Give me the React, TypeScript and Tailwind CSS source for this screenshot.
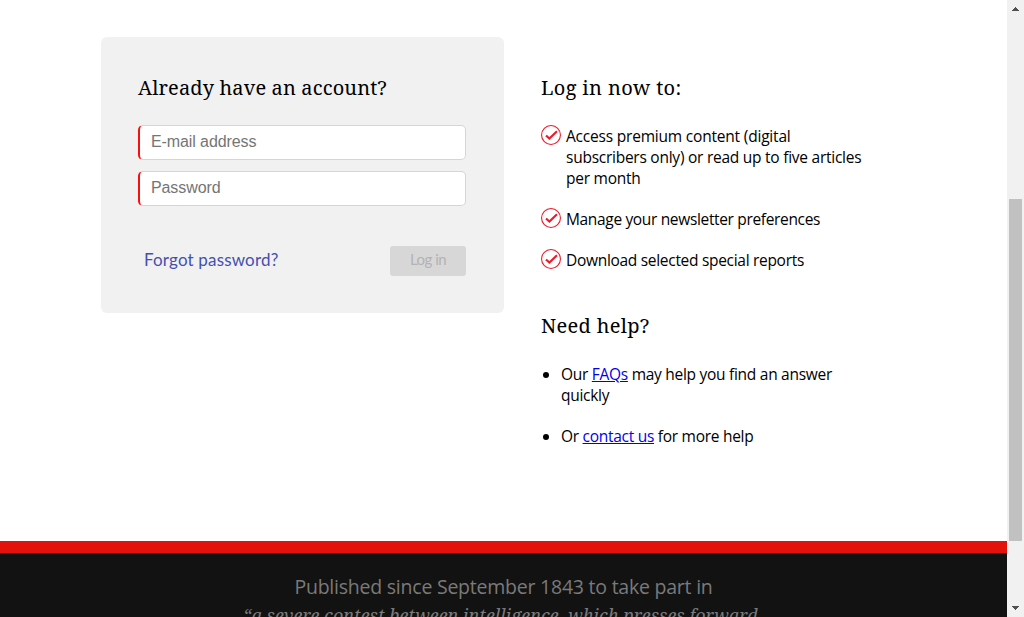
import type { ReactNode } from "react";

const serif = "font-['Noto_Serif','DejaVu_Serif_Condensed',serif]";

function Heading({ children, className }: { children: ReactNode; className: string }) {
  return (
    <h2 className={`${serif} text-[20px] leading-[28px] font-normal whitespace-nowrap ${className}`}>{children}</h2>
  );
}

function CheckItem({ children, className = "" }: { children: ReactNode; className?: string }) {
  return (
    <li className={`flex whitespace-nowrap ${className}`}>
      <svg className="mr-[5px] -mt-px size-5 shrink-0" viewBox="0 0 20 20" fill="none" stroke="#ec1c2c">
        <circle cx="10" cy="10" r="9.45" strokeWidth="1.1" />
        <path d="M5 10.5 8.4 13.5 16 6.3" strokeWidth="2.2" />
      </svg>
      <div>{children}</div>
    </li>
  );
}

function Field({ type, label }: { type: string; label: string }) {
  return (
    <input
      type={type}
      placeholder={label}
      className="block h-[35px] w-full rounded-[5px] border border-l-2 border-[#d5d5d5] border-l-[#fb0f0c] bg-white pb-px pl-[11px] font-['Liberation_Sans',sans-serif] text-[16px] tracking-[-0.1px] placeholder:text-[#757575]"
    />
  );
}

export default function App() {
  return (
    <div className="flex h-[617px] overflow-hidden bg-white font-['Open_Sans',sans-serif] text-black">
      <div className="flex w-[1007px] flex-col">
        <main className="flex h-[541px] shrink-0 items-start gap-[37px] pt-[37px] pl-[101px]">
          <form className="h-[276px] w-[403px] rounded-[6px] bg-[#f1f1f1] pt-[37px] pr-[38px] pl-[37px]">
            <Heading className="tracking-[0.13px]">Already have an account?</Heading>
            <div className="mt-[23px] flex flex-col gap-[11px]">
              <Field type="email" label="E-mail address" />
              <Field type="password" label="Password" />
            </div>
            <div className="mt-10 flex items-center justify-between pl-[6px] font-['Lato',sans-serif]">
              <a className="pb-[2px] text-[17px] leading-5 tracking-[0.17px] text-[#4450b0]">Forgot password?</a>
              <button
                type="button"
                className="h-[30px] w-[76px] rounded-[3px] bg-[#d7d7d7] pb-[3px] text-[15px] tracking-[-0.5px] text-[#b3b3b3]"
              >
                Log in
              </button>
            </div>
          </form>

          <section className="w-[330px] pt-[37px] text-[15.5px] leading-[21px]">
            <Heading className="tracking-[0.35px]">Log in now to:</Heading>
            <ul className="mt-6 flex flex-col gap-5">
              <CheckItem>
                <p className="tracking-[-0.2px]">Access premium content (digital</p>
                <p className="tracking-[-0.25px]">subscribers only) or read up to five articles</p>
                <p className="tracking-[-0.25px]">per month</p>
              </CheckItem>
              <CheckItem className="tracking-[-0.34px]">Manage your newsletter preferences</CheckItem>
              <CheckItem className="tracking-[-0.3px]">Download selected special reports</CheckItem>
            </ul>
            <Heading className="mt-[41px] tracking-[0.3px]">Need help?</Heading>
            <ul className="mt-[24px] flex flex-col gap-5 whitespace-nowrap">
              <li className="flex gap-[12px] pl-[2px]">
                <span className="mt-2 size-[6px] rounded-full bg-black" />
                <div className="tracking-[-0.28px]">
                  Our <a className="text-[#0000ee] underline">FAQs</a> may help you find an answer
                  <br />
                  quickly
                </div>
              </li>
              <li className="flex gap-[12px] pl-[2px]">
                <span className="mt-2 size-[6px] rounded-full bg-black" />
                <div className="tracking-[-0.28px]">
                  Or <a className="text-[#0000ee] underline">contact us</a> for more help
                </div>
              </li>
            </ul>
          </section>
        </main>
        <footer className="h-[100px] shrink-0 border-t-[12px] border-[#e3120b] bg-[#121212] pt-[20px] text-center whitespace-nowrap text-[#7a7a7a]">
          <p className="text-[19.5px] leading-[28px] tracking-[-0.23px]">
            Published since September 1843 to take part in
          </p>
          <p className={`${serif} pr-[6px] text-[18px] leading-[28px] tracking-[0.02px] italic`}>
            “a severe contest between intelligence, which presses forward
          </p>
        </footer>
      </div>

      <div className="flex h-[617px] w-[17px] flex-col items-center bg-[#f1f1f1]">
        <svg className="h-[17px] w-[17px] shrink-0" viewBox="0 0 17 17" fill="#505050" shapeRendering="crispEdges">
          <path d="M8 7h1v1h1v1h1v1h1v1H5v-1h1V9h1V8h1z" />
        </svg>
        <div className="mt-[182px] h-[342px] w-[13px] bg-[#c1c1c1]" />
        <svg className="mt-auto h-[17px] w-[17px] shrink-0" viewBox="0 0 17 17" fill="#505050" shapeRendering="crispEdges">
          <path d="M5 6h7v1h-1v1h-1v1H9v1H8V9H7V8H6V7H5z" />
        </svg>
      </div>
    </div>
  );
}
